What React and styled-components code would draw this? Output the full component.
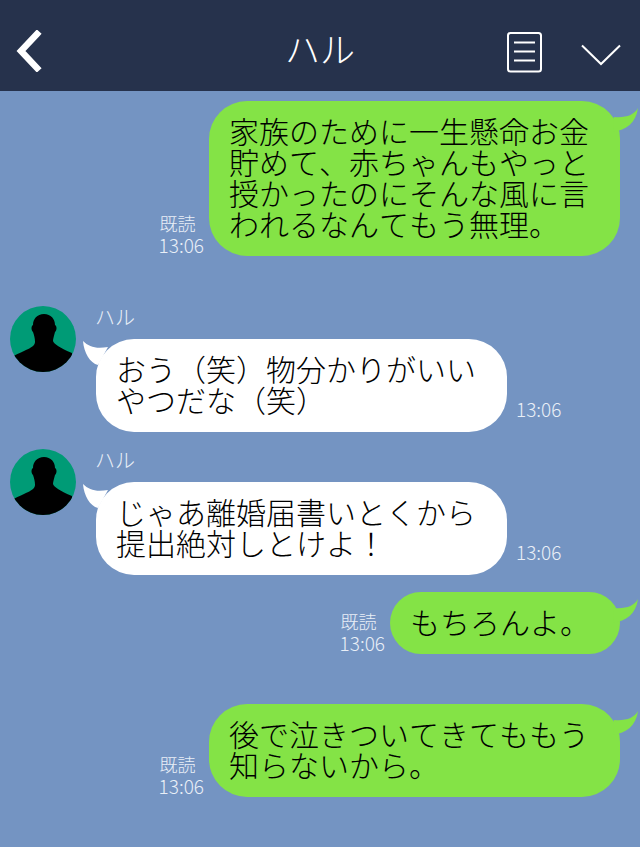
import React from 'react';
import styled, { createGlobalStyle } from 'styled-components';

const GlobalStyle = createGlobalStyle`
  html, body {
    margin: 0;
    padding: 0;
    background: #7494c2;
  }
  body {
    font-family: "Noto Sans CJK JP", "Noto Sans", sans-serif;
    font-kerning: none;
  }
`;

const Page = styled.div`
  width: 640px;
  height: 847px;
  overflow: hidden;
  background: #7494c2;
`;

const Header = styled.header`
  height: 91px;
  background: #26324c;
  display: grid;
  grid-template-columns: 1fr auto 1fr;
  align-items: center;
  padding: 10px 19px 0 16px;
  box-sizing: border-box;
`;

const Title = styled.h1`
  margin: -5px 0 0;
  transform: translateX(1.5px);
  color: #fff;
  font-size: 35px;
  font-weight: 200;
  line-height: 40px;
`;

const HeaderIcons = styled.div`
  display: flex;
  align-items: center;
  justify-content: flex-end;
  gap: 38px;
`;

const ListIcon = styled.svg`
  margin-top: 3px;
`;

const DownIcon = styled.svg`
  margin-top: 9px;
`;

const Chat = styled.main`
  padding: 10px 20px 0 10px;
  display: flex;
  flex-direction: column;
`;

const Sent = styled.div`
  display: flex;
  justify-content: flex-end;
  align-items: flex-end;
  gap: 5px;
  margin-top: ${p => p.$gap || 0}px;
`;

const Received = styled.div`
  display: flex;
  align-items: flex-start;
  gap: 20px;
  margin-top: ${p => p.$gap || 0}px;
`;

const Meta = styled.div`
  color: #e9eff7;
  font-size: 19px;
  line-height: 21px;
  font-weight: 300;
  padding-bottom: ${p => p.$lift || 0}px;
`;

const ReadMark = styled.div`
  font-size: 18px;
  padding-left: 1px;
`;

const Body = styled.div`
  display: flex;
  flex-direction: column;
`;

const Name = styled.div`
  color: #e9eff7;
  font-size: 20px;
  font-weight: 300;
  line-height: 24px;
  height: 33px;
  margin-left: -1px;
  margin-top: -1px;
  margin-bottom: 1px;
`;

const BubbleRow = styled.div`
  display: flex;
  align-items: flex-end;
  gap: 9px;
`;

const Bubble = styled.div`
  position: relative;
  box-sizing: border-box;
  width: ${p => p.$width || 411}px;
  padding: 14px 20px 17px;
  border-radius: 38px;
  background: ${p => (p.$sent ? '#84e346' : '#fff')};
  color: #000;
  font-size: 30px;
  font-weight: 300;
  line-height: 31px;
  white-space: nowrap;
`;

const Tail = styled.svg`
  position: absolute;
  top: ${p => p.$top}px;
  ${p => (p.$sent ? 'right: -19px;' : 'left: -14px;')}
`;

const Avatar = () => (
  <svg width="66" height="66" viewBox="0 0 66 66" style={{ flex: 'none' }}>
    <defs>
      <clipPath id="avatarClip">
        <circle cx="33" cy="33" r="33" />
      </clipPath>
    </defs>
    <g clipPath="url(#avatarClip)">
      <rect width="66" height="66" fill="#009b76" />
      <path
        d="M34 8C41 8 45 13 45 19C47 20 47 24 45 26C44 30 43 33 43 35C44 38 50 42 62 47V66H0V52C14 44 25 42 25 36C25 32 24 29 23 26C21 24 21 20 23 19C23 13 27 8 34 8z"
        fill="#000"
      />
    </g>
  </svg>
);

const SentTail = () => (
  <Tail $sent $top={7} width="26" height="24" viewBox="0 0 26 24">
    <path d="M25 0C21 7 13 10 1 9L0 24C13 22 23 15 25 0z" fill="#84e346" />
  </Tail>
);

const ReceivedTail = () => (
  <Tail $top={2} width="28" height="24" viewBox="0 0 28 24">
    <path d="M1 0C7 6 14 8 26 6L16 24C8 22 2 12 1 0z" fill="#fff" />
  </Tail>
);

const SentMessage = ({ lines, width, gap }) => (
  <Sent $gap={gap}>
    <Meta $lift={1}>
      <ReadMark>既読</ReadMark>
      <div>13:06</div>
    </Meta>
    <Bubble $sent $width={width}>
      <SentTail />
      {lines.map(line => <div key={line}>{line}</div>)}
    </Bubble>
  </Sent>
);

const ReceivedMessage = ({ lines, gap }) => (
  <Received $gap={gap}>
    <Avatar />
    <Body>
      <Name>ハル</Name>
      <BubbleRow>
        <Bubble>
          <ReceivedTail />
          {lines.map(line => <div key={line}>{line}</div>)}
        </Bubble>
        <Meta $lift={13}>13:06</Meta>
      </BubbleRow>
    </Body>
  </Received>
);

export default function App() {
  return (
    <Page>
      <GlobalStyle />
      <Header>
        <svg width="28" height="42" viewBox="0 0 28 42">
          <path d="M21 4L5 21l16 17" fill="none" stroke="#fff" strokeWidth="6.5" strokeLinecap="square" />
        </svg>
        <Title>ハル</Title>
        <HeaderIcons>
          <ListIcon width="36" height="41" viewBox="0 0 36 41">
            <rect x="1" y="1" width="33" height="38.5" rx="2.5" fill="none" stroke="#fff" strokeWidth="2" />
            <path d="M7 10.5h21M7 19.5h21M7 28.5h21" stroke="#fff" strokeWidth="2" />
          </ListIcon>
          <DownIcon width="40" height="22" viewBox="0 0 40 22">
            <path d="M1 1.5L20 20 39 1.5" fill="none" stroke="#fff" strokeWidth="2" />
          </DownIcon>
        </HeaderIcons>
      </Header>
      <Chat>
        <SentMessage
          lines={['家族のために一生懸命お金', '貯めて、赤ちゃんもやっと', '授かったのにそんな風に言', 'われるなんてもう無理。']}
        />
        <ReceivedMessage gap={50} lines={['おう（笑）物分かりがいい', 'やつだな（笑）']} />
        <ReceivedMessage gap={17} lines={['じゃあ離婚届書いとくから', '提出絶対しとけよ！']} />
        <SentMessage gap={17} width={230} lines={['もちろんよ。']} />
        <SentMessage gap={50} lines={['後で泣きついてきてももう', '知らないから。']} />
      </Chat>
    </Page>
  );
}
